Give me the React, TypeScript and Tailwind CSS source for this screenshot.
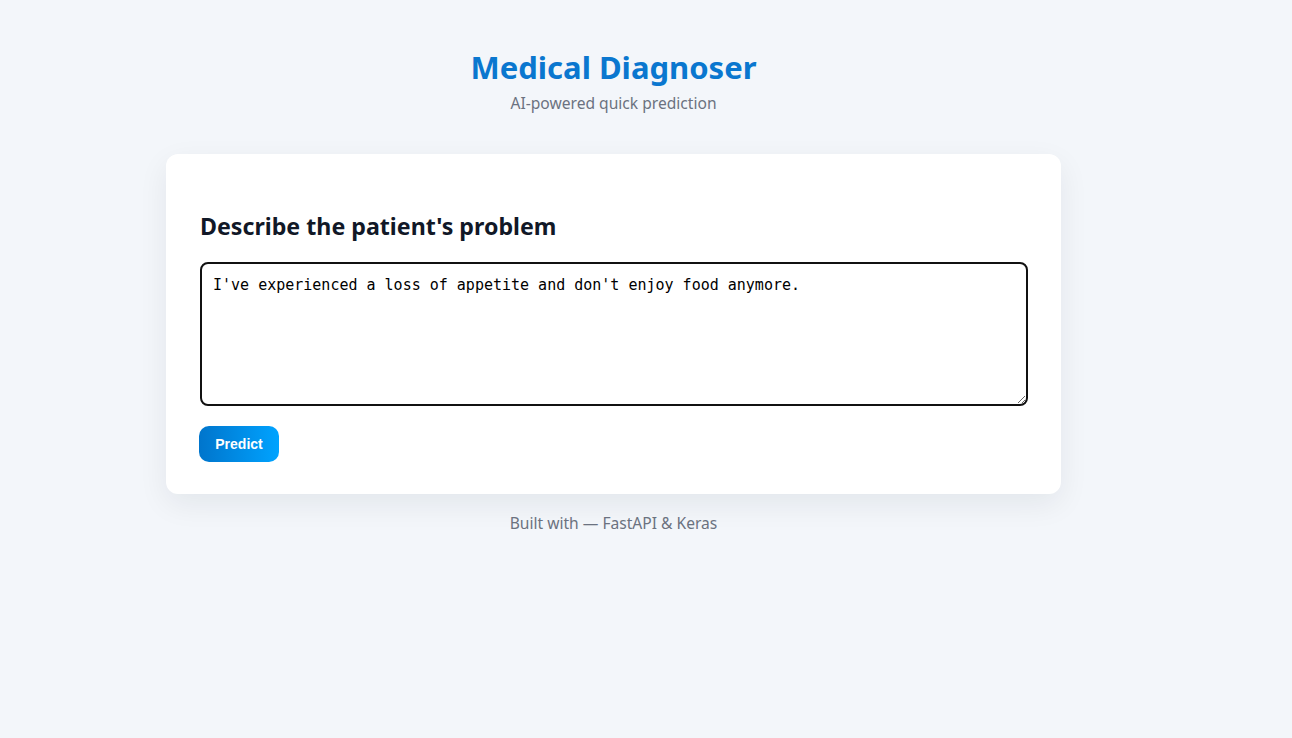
import { useState } from "react";

const App = () => {
  const [text, setText] = useState(
    "I've experienced a loss of appetite and don't enjoy food anymore."
  );

  return (
    <div className="min-h-screen bg-[#f3f6fa] font-['Noto_Sans',sans-serif]">
      <div className="w-[1227px] flex flex-col items-center pt-[45px]">
        {/* Header */}
        <h1 className="text-[31px] leading-[44px] font-bold text-[#0a77cf]">
          Medical Diagnoser
        </h1>
        <p className="mt-[3px] text-[15.6px] leading-[22px] text-[#6b7280]">
          AI-powered quick prediction
        </p>

        {/* Card */}
        <div className="mt-[40px] w-[895px] bg-white rounded-[12px] pl-[34px] pr-[33px] pt-[56px] pb-[32px] shadow-[0_10px_30px_rgba(15,23,42,0.07)]">
          <h2 className="text-[23.2px] leading-[32px] font-bold text-[#111827]">
            Describe the patient's problem
          </h2>
          <textarea
            value={text}
            onChange={(e) => setText(e.target.value)}
            className="mt-[20px] block w-full h-[144px] border-2 border-[#111] rounded-[8px] px-[11px] py-[12px] text-[15px] leading-[18px] text-black font-['DejaVu_Sans_Mono',monospace] outline-none"
          />
          <button className="mt-[20px] w-[80px] h-[36px] rounded-[10px] bg-gradient-to-r from-[#0075cc] to-[#00a3ff] text-white text-[14px] font-bold font-['Liberation_Sans',Arial,sans-serif] -ml-px">
            Predict
          </button>
        </div>

        {/* Footer */}
        <p className="mt-[18px] text-[15.6px] leading-[22px] text-[#6b7280]">
          Built with — FastAPI &amp; Keras
        </p>
      </div>
    </div>
  );
};

export default App;
